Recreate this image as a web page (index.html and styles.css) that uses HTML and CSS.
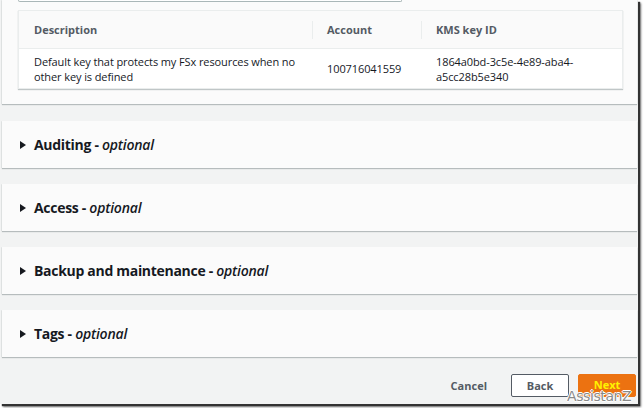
FILE: index.html
```html
<!DOCTYPE html>
<html>
<head>
<meta charset="utf-8">
<link rel="stylesheet" href="styles.css">
</head>
<body>
<div class="frame">
  <div class="panel top-panel">
    <div class="input-stub"></div>
    <div class="table">
      <div class="row head">
        <div class="cell c1">Description</div>
        <div class="cell c2"><span class="div"></span>Account</div>
        <div class="cell c3"><span class="div"></span>KMS key ID</div>
      </div>
      <div class="row body">
        <div class="cell c1">Default key that protects my FSx resources when no other key is defined</div>
        <div class="cell c2">100716041559</div>
        <div class="cell c3">1864a0bd-3c5e-4e89-aba4-a5cc28b5e340</div>
      </div>
    </div>
  </div>
  <div class="panel section"><span class="caret"></span><b>Auditing - </b><i>optional</i></div>
  <div class="panel section"><span class="caret"></span><b>Access - </b><i>optional</i></div>
  <div class="panel section"><span class="caret"></span><b>Backup and maintenance - </b><i>optional</i></div>
  <div class="panel section"><span class="caret"></span><b>Tags - </b><i>optional</i></div>
  <div class="footer">
    <span class="cancel">Cancel</span>
    <span class="btn back">Back</span>
    <span class="btn next">Next</span>
  </div>
  <div class="watermark">AssistanZ</div>
</div>
</body>
</html>
```
FILE: styles.css
```css
html, body {
  margin: 0;
  padding: 0;
  background: #fff;
}
body {
  width: 644px;
  height: 408px;
  overflow: hidden;
  font-family: "Open Sans", "Noto Sans", sans-serif;
  color: #16191f;
}
.frame {
  position: relative;
  width: 638px;
  height: 404px;
  background: #f2f3f3;
  box-shadow: 2px 2px 1px #333, 3px 3px 2px #777;
  display: flex;
  flex-direction: column;
  overflow: hidden;
}
.panel {
  margin-left: 2px;
  margin-right: 1px;
  background: #fbfbfb;
  box-shadow: 0 1px 1px #b6bcbd, -1px 0 0 #e6e9e9;
}
.top-panel {
  height: 104px;
  flex: none;
  padding: 0 16px 0 16px;
  box-sizing: border-box;
}
.input-stub {
  width: 382px;
  height: 1px;
  border: 1px solid #aab7b8;
  border-top: none;
  border-radius: 0 0 2px 2px;
  background: #fff;
  margin-bottom: 8px;
}
.table {
  width: 603px;
  background: #fff;
  border: 1px solid #eaeded;
  box-shadow: 0 1px 1px #c0c6c7;
  font-size: 11px;
  letter-spacing: -0.1px;
}
.row {
  display: grid;
  grid-template-columns: 293px 109px 1fr;
}
.head {
  height: 37px;
  background: #fafafa;
  border-bottom: 1px solid #eaeded;
  font-weight: 700;
  color: #545b64;
  letter-spacing: 0;
}
.head .cell {
  display: flex;
  align-items: center;
  position: relative;
}
.head .div {
  position: absolute;
  left: 0;
  top: 10px;
  width: 1px;
  height: 18px;
  background: #eaeded;
}
.body {
  height: 39px;
  color: #16191f;
}
.cell {
  padding-left: 15px;
  padding-right: 12px;
}
.body .cell {
  display: flex;
  align-items: center;
  line-height: 15px;
}
.body .c3 {
  padding-right: 40px;
}
.section {
  flex: none;
  margin-top: 17px;
  height: 47px;
  display: flex;
  align-items: center;
  padding-left: 18px;
  font-size: 14px;
}
.section + .section {
  margin-top: 16px;
}
.section b {
  font-weight: 700;
  white-space: pre;
  letter-spacing: -0.3px;
}
.section i {
  font-weight: 600;
  font-style: italic;
  letter-spacing: -0.2px;
}
.caret {
  width: 0;
  height: 0;
  border-top: 4px solid transparent;
  border-bottom: 4px solid transparent;
  border-left: 6px solid #16191f;
  margin-right: 8px;
}
.footer {
  flex: none;
  display: flex;
  align-items: center;
  justify-content: flex-end;
  margin-top: 17px;
  padding-right: 2px;
  height: 23px;
  font-size: 11px;
  font-weight: 700;
}
.cancel {
  color: #545b64;
  margin-right: 24px;
}
.btn {
  box-sizing: border-box;
  width: 58px;
  height: 23px;
  display: flex;
  align-items: center;
  justify-content: center;
  border-radius: 2px;
}
.back {
  background: #fff;
  border: 1px solid #545b64;
  color: #545b64;
  margin-right: 9px;
}
.next {
  background: #ec7211;
  color: #fff200;
  border: 1px solid #ec7211;
  padding-bottom: 2px;
}
.watermark {
  position: absolute;
  left: 567px;
  top: 388px;
  font-family: "DejaVu Sans", sans-serif;
  font-size: 14px;
  line-height: 16px;
  color: #8a8a8a;
  text-shadow: 1px 0 0 #fff, -1px 0 0 #fff, 0 1px 0 #fff, 0 -1px 0 #fff;
  letter-spacing: -0.4px;
}
```
